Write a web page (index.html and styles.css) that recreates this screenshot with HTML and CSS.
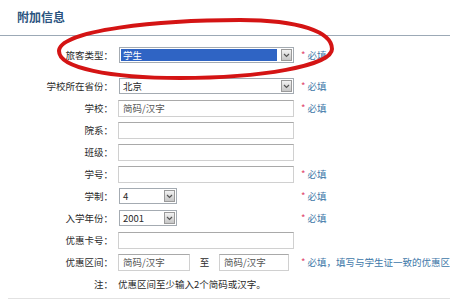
FILE: index.html
```html
<!DOCTYPE html>
<html lang="zh-CN">
<head>
    <meta charset="UTF-8">
    <title>附加信息</title>
    <link rel="stylesheet" href="styles.css">
</head>
<body>
    <h2 class="title">附加信息</h2>

    <div class="form">
        <div class="row">
            <span class="label">旅客类型：</span>
            <div class="select wide selected">
                <span class="value">学生</span>
                <span class="arrow"><svg width="7" height="5" viewBox="0 0 7 5"><polyline points="1,1 3.5,3.5 6,1" fill="none" stroke="#555" stroke-width="1.2"/></svg></span>
            </div>
            <span class="req"><span class="star">*</span> 必填</span>
        </div>

        <div class="row second">
            <span class="label">学校所在省份：</span>
            <div class="select wide">
                <span class="value">北京</span>
                <span class="arrow"><svg width="7" height="5" viewBox="0 0 7 5"><polyline points="1,1 3.5,3.5 6,1" fill="none" stroke="#555" stroke-width="1.2"/></svg></span>
            </div>
            <span class="req"><span class="star">*</span> 必填</span>
        </div>

        <div class="row">
            <span class="label">学校：</span>
            <div class="input hint">简码/汉字</div>
            <span class="req"><span class="star">*</span> 必填</span>
        </div>

        <div class="row">
            <span class="label">院系：</span>
            <div class="input"></div>
        </div>

        <div class="row">
            <span class="label">班级：</span>
            <div class="input"></div>
        </div>

        <div class="row">
            <span class="label">学号：</span>
            <div class="input"></div>
            <span class="req"><span class="star">*</span> 必填</span>
        </div>

        <div class="row">
            <span class="label">学制：</span>
            <div class="select small">
                <span class="value">4</span>
                <span class="arrow"><svg width="7" height="5" viewBox="0 0 7 5"><polyline points="1,1 3.5,3.5 6,1" fill="none" stroke="#555" stroke-width="1.2"/></svg></span>
            </div>
            <span class="req"><span class="star">*</span> 必填</span>
        </div>

        <div class="row">
            <span class="label">入学年份：</span>
            <div class="select small">
                <span class="value">2001</span>
                <span class="arrow"><svg width="7" height="5" viewBox="0 0 7 5"><polyline points="1,1 3.5,3.5 6,1" fill="none" stroke="#555" stroke-width="1.2"/></svg></span>
            </div>
            <span class="req"><span class="star">*</span> 必填</span>
        </div>

        <div class="row">
            <span class="label">优惠卡号：</span>
            <div class="input"></div>
        </div>

        <div class="row">
            <span class="label">优惠区间：</span>
            <div class="range">
                <div class="input hint from">简码/汉字</div>
                <span class="to">至</span>
                <div class="input hint until">简码/汉字</div>
            </div>
            <span class="req"><span class="star">*</span> 必填，填写与学生证一致的优惠区</span>
        </div>

        <div class="row">
            <span class="label">注：</span>
            <span class="note">优惠区间至少输入2个简码或汉字。</span>
        </div>
    </div>

    <!-- hand-drawn red circle over the first row -->
    <svg class="circle" width="450" height="300" viewBox="0 0 450 300">
        <path d="M59,51 C59,30 160,20 240,20 C300,20 332,32 332,49 C332,66 260,78 180,78 C110,78 59,68 59,51 Z" fill="none" stroke="#d41414" stroke-width="4"/>
    </svg>
</body>
</html>
```

FILE: styles.css
```css
* {
    box-sizing: border-box;
}

html, body {
    margin: 0;
    overflow: hidden;
    background-color: #fff;
}

body {
    position: relative;
    width: 450px;
    height: 300px;
    font-family: "Noto Sans CJK SC", sans-serif;
    font-size: 9.5px;
    color: #2a2a2a;
}

.title {
    margin: 0;
    height: 36px;
    padding: 10px 0 0 17px;
    font-size: 12px;
    line-height: 14px;
    font-weight: bold;
    color: #2b5480;
    border-bottom: 1px solid #9ca9b6;
}

.form {
    padding: 8px 0 3px;
    border-bottom: 1px solid #e2e2e2;
    margin-left: 8px;
}

.row {
    display: grid;
    grid-template-columns: 105px 176px minmax(0, 1fr);
    column-gap: 5px;
    align-items: center;
    height: 22px;
}

.row.second {
    margin-top: 9px;
}

.label {
    text-align: right;
    white-space: nowrap;
}

.input {
    width: 176px;
    height: 17px;
    padding: 0 4px;
    line-height: 15px;
    border: 1px solid #d0d0d0;
    border-top-color: #a9a9a9;
    background-color: #fff;
}

.hint {
    color: #555;
}

.select {
    display: flex;
    height: 16px;
    padding: 1px;
    border: 1px solid #a4abb2;
    background-color: #fff;
}

.select.wide {
    width: 175px;
    margin-left: 1px;
}

.select.small {
    width: 58px;
    margin-left: 1px;
}

.select .value {
    flex: 1;
    padding-left: 2px;
    line-height: 12px;
}

.select.selected .value {
    background-color: #2f64c4;
    color: #fff;
}

.arrow {
    display: flex;
    align-items: center;
    justify-content: center;
    width: 11px;
    margin-left: 4px;
    border: 1px solid #9a9a9a;
    background: linear-gradient(#f2f2f2, #c6c6c6);
}

.range {
    display: flex;
    align-items: center;
}

.range .from {
    width: 72px;
}

.range .to {
    width: 29px;
    text-align: center;
}

.range .until {
    width: 70px;
}

.req {
    white-space: nowrap;
    color: #3d77a8;
    padding-left: 2px;
}

.star {
    color: #e0446a;
}

.note {
    grid-column: 2 / 4;
    white-space: nowrap;
}

.circle {
    position: absolute;
    top: 0;
    left: 0;
    pointer-events: none;
}
```
